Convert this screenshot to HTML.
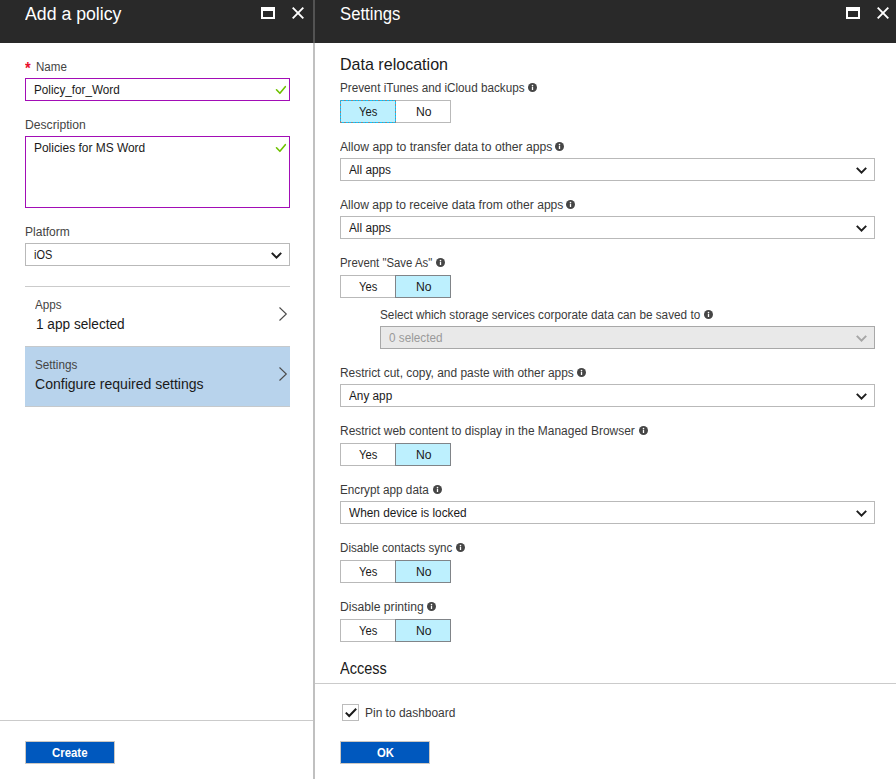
<!DOCTYPE html>
<html><head><meta charset="utf-8"><title>Add a policy</title>
<style>
html,body{margin:0;padding:0;}
body{width:896px;height:779px;position:relative;overflow:hidden;background:#fff;font-family:"Liberation Sans",sans-serif;}
.a{position:absolute;box-sizing:border-box;}
.t{position:absolute;white-space:nowrap;line-height:normal;transform-origin:0 0;}
.hdr{left:0;top:0;width:896px;height:43px;background:#292929;}
.inp{border:1px solid #a20db6;background:#fff;}
.sel{border:1px solid #b9b9b9;background:#fff;height:23px;}
.seld{border:1px solid #a8a8a8;background:#e9e9e9;height:23px;}
.tg{height:23px;border:1px solid #b9b9b9;background:#fff;}
.on{height:23px;border:1px solid #808488;background:#bdf0fe;}
.fo{background:repeating-linear-gradient(90deg,#8f8583 0 1.3px,transparent 1.3px 3.4px) 1px 0/100% 1px no-repeat,repeating-linear-gradient(90deg,#8f8583 0 1.3px,transparent 1.3px 3.4px) 1px 100%/100% 1px no-repeat,repeating-linear-gradient(180deg,#8f8583 0 1.3px,transparent 1.3px 3.4px) 0 1px/1px 100% no-repeat,repeating-linear-gradient(180deg,#8f8583 0 1.3px,transparent 1.3px 3.4px) 100% 1px/1px 100% no-repeat;}
.btn{height:23px;width:90px;background:#0058be;border:1px solid #cdc8c2;}
.hl{height:1px;background:#cbcbcb;}
svg{position:absolute;overflow:visible;}
</style></head><body>
<!-- header -->
<div class="a hdr"></div>
<div class="a" style="left:313px;top:0;width:2px;height:43px;background:#535353"></div>
<div class="a" style="left:313px;top:43px;width:2px;height:736px;background:#c0c0c0"></div>
<!-- header icons -->
<div class="a" style="left:261px;top:7px;width:14px;height:12px;border:2px solid #fff;border-top-width:4px"></div>
<svg style="left:292px;top:7px" width="12" height="12" viewBox="0 0 12 12"><path d="M0.7 0.7L11.3 11.3M11.3 0.7L0.7 11.3" stroke="#fff" stroke-width="1.9" fill="none"/></svg>
<div class="a" style="left:846px;top:7px;width:14px;height:12px;border:2px solid #fff;border-top-width:4px"></div>
<svg style="left:877px;top:7px" width="12" height="12" viewBox="0 0 12 12"><path d="M0.7 0.7L11.3 11.3M11.3 0.7L0.7 11.3" stroke="#fff" stroke-width="1.9" fill="none"/></svg>

<!-- left panel -->
<div class="a inp" style="left:25px;top:78px;width:265px;height:23px"></div>
<svg style="left:276px;top:86px" width="10" height="8" viewBox="0 0 10 8"><path d="M0.5 3.8L3.9 7.3L9.3 0.7" stroke="#6ec200" stroke-width="1.6" stroke-linecap="round" stroke-linejoin="round" fill="none"/></svg>
<div class="a inp" style="left:25px;top:136px;width:265px;height:72px"></div>
<svg style="left:276px;top:144px" width="10" height="8" viewBox="0 0 10 8"><path d="M0.5 3.8L3.9 7.3L9.3 0.7" stroke="#6ec200" stroke-width="1.6" stroke-linecap="round" stroke-linejoin="round" fill="none"/></svg>
<div class="a sel" style="left:25px;top:243px;width:265px"></div>
<svg style="left:271px;top:252px" width="11" height="7" viewBox="0 0 11 7"><path d="M0.8 0.9L5.5 5.6L10.2 0.9" stroke="#1e1e1e" stroke-width="2" fill="none"/></svg>

<div class="a hl" style="left:25px;top:286px;width:265px"></div>
<svg style="left:279px;top:307px" width="8" height="14" viewBox="0 0 8 14"><path d="M0.5 0.5L7.3 7L0.5 13.5" stroke="#4a4a4a" stroke-width="1.1" fill="none"/></svg>
<div class="a" style="left:25px;top:346px;width:265px;height:61px;background:#b8d3ec;border-top:1px solid #c5c9cc;border-bottom:1px solid #c5c9cc"></div>
<svg style="left:279px;top:367px" width="8" height="14" viewBox="0 0 8 14"><path d="M0.5 0.5L7.3 7L0.5 13.5" stroke="#4a4a4a" stroke-width="1.1" fill="none"/></svg>

<div class="a hl" style="left:0;top:720px;width:313px"></div>
<div class="a btn" style="left:25px;top:741px"></div>

<!-- right panel -->
<div class="a tg" style="left:340px;top:100px;width:111px"></div><div class="a on" style="left:340px;top:100px;width:56px;border:1px solid #10c4fc"></div><div class="a fo" style="left:340px;top:100px;width:56px;height:23px"></div>
<svg style="left:528px;top:83px" width="9" height="9" viewBox="0 0 9 9"><circle cx="4.5" cy="4.5" r="4.5" fill="#464646"/><rect x="3.85" y="3.7" width="1.3" height="3.3" fill="#fff"/><circle cx="4.5" cy="2.45" r="0.8" fill="#fff"/></svg>
<div class="a sel" style="left:340px;top:158px;width:535px"></div><svg style="left:856px;top:167px" width="11" height="7" viewBox="0 0 11 7"><path d="M0.8 0.9L5.5 5.6L10.2 0.9" stroke="#1e1e1e" stroke-width="2" fill="none"/></svg>
<svg style="left:555px;top:142px" width="9" height="9" viewBox="0 0 9 9"><circle cx="4.5" cy="4.5" r="4.5" fill="#464646"/><rect x="3.85" y="3.7" width="1.3" height="3.3" fill="#fff"/><circle cx="4.5" cy="2.45" r="0.8" fill="#fff"/></svg>
<div class="a sel" style="left:340px;top:216px;width:535px"></div><svg style="left:856px;top:225px" width="11" height="7" viewBox="0 0 11 7"><path d="M0.8 0.9L5.5 5.6L10.2 0.9" stroke="#1e1e1e" stroke-width="2" fill="none"/></svg>
<svg style="left:566px;top:200px" width="9" height="9" viewBox="0 0 9 9"><circle cx="4.5" cy="4.5" r="4.5" fill="#464646"/><rect x="3.85" y="3.7" width="1.3" height="3.3" fill="#fff"/><circle cx="4.5" cy="2.45" r="0.8" fill="#fff"/></svg>
<div class="a tg" style="left:340px;top:275px;width:111px"></div><div class="a on" style="left:395px;top:275px;width:56px"></div>
<svg style="left:436px;top:258px" width="9" height="9" viewBox="0 0 9 9"><circle cx="4.5" cy="4.5" r="4.5" fill="#464646"/><rect x="3.85" y="3.7" width="1.3" height="3.3" fill="#fff"/><circle cx="4.5" cy="2.45" r="0.8" fill="#fff"/></svg>
<div class="a seld" style="left:380px;top:326px;width:495px"></div><svg style="left:856px;top:335px" width="11" height="7" viewBox="0 0 11 7"><path d="M0.8 0.9L5.5 5.6L10.2 0.9" stroke="#a6a6a6" stroke-width="2" fill="none"/></svg>
<svg style="left:704px;top:310px" width="9" height="9" viewBox="0 0 9 9"><circle cx="4.5" cy="4.5" r="4.5" fill="#464646"/><rect x="3.85" y="3.7" width="1.3" height="3.3" fill="#fff"/><circle cx="4.5" cy="2.45" r="0.8" fill="#fff"/></svg>
<div class="a sel" style="left:340px;top:384px;width:535px"></div><svg style="left:856px;top:393px" width="11" height="7" viewBox="0 0 11 7"><path d="M0.8 0.9L5.5 5.6L10.2 0.9" stroke="#1e1e1e" stroke-width="2" fill="none"/></svg>
<svg style="left:577px;top:368px" width="9" height="9" viewBox="0 0 9 9"><circle cx="4.5" cy="4.5" r="4.5" fill="#464646"/><rect x="3.85" y="3.7" width="1.3" height="3.3" fill="#fff"/><circle cx="4.5" cy="2.45" r="0.8" fill="#fff"/></svg>
<div class="a tg" style="left:340px;top:443px;width:111px"></div><div class="a on" style="left:395px;top:443px;width:56px"></div>
<svg style="left:639px;top:426px" width="9" height="9" viewBox="0 0 9 9"><circle cx="4.5" cy="4.5" r="4.5" fill="#464646"/><rect x="3.85" y="3.7" width="1.3" height="3.3" fill="#fff"/><circle cx="4.5" cy="2.45" r="0.8" fill="#fff"/></svg>
<div class="a sel" style="left:340px;top:501px;width:535px"></div><svg style="left:856px;top:510px" width="11" height="7" viewBox="0 0 11 7"><path d="M0.8 0.9L5.5 5.6L10.2 0.9" stroke="#1e1e1e" stroke-width="2" fill="none"/></svg>
<svg style="left:433px;top:485px" width="9" height="9" viewBox="0 0 9 9"><circle cx="4.5" cy="4.5" r="4.5" fill="#464646"/><rect x="3.85" y="3.7" width="1.3" height="3.3" fill="#fff"/><circle cx="4.5" cy="2.45" r="0.8" fill="#fff"/></svg>
<div class="a tg" style="left:340px;top:560px;width:111px"></div><div class="a on" style="left:395px;top:560px;width:56px"></div>
<svg style="left:456px;top:543px" width="9" height="9" viewBox="0 0 9 9"><circle cx="4.5" cy="4.5" r="4.5" fill="#464646"/><rect x="3.85" y="3.7" width="1.3" height="3.3" fill="#fff"/><circle cx="4.5" cy="2.45" r="0.8" fill="#fff"/></svg>
<div class="a tg" style="left:340px;top:619px;width:111px"></div><div class="a on" style="left:395px;top:619px;width:56px"></div>
<svg style="left:427px;top:602px" width="9" height="9" viewBox="0 0 9 9"><circle cx="4.5" cy="4.5" r="4.5" fill="#464646"/><rect x="3.85" y="3.7" width="1.3" height="3.3" fill="#fff"/><circle cx="4.5" cy="2.45" r="0.8" fill="#fff"/></svg>
<div class="a hl" style="left:315px;top:683px;width:581px"></div>
<div class="a" style="left:342px;top:704px;width:17px;height:17px;border:1px solid #bcbcbc;background:#fff"></div>
<svg style="left:345px;top:708px" width="12" height="9" viewBox="0 0 12 9"><path d="M0.8 4.6L4.2 8L11.2 0.8" stroke="#1a1a1a" stroke-width="2" fill="none"/></svg>
<div class="a btn" style="left:340px;top:741px"></div>

<!-- text -->
<span class="t" style="left:25.00px;top:4.01px;font-size:18px;color:#ffffff;transform:scaleX(0.9831)">Add a policy</span>
<span class="t" style="left:340.40px;top:4.01px;font-size:18px;color:#ffffff;transform:scaleX(0.9271)">Settings</span>
<span class="t" style="left:25.00px;top:59.02px;font-size:17px;color:#e8112d;font-weight:700;transform:scaleX(0.8571)">*</span>
<span class="t" style="left:35.80px;top:59.74px;font-size:12px;color:#444;transform:scaleX(0.9649)">Name</span>
<span class="t" style="left:33.70px;top:82.89px;font-size:12px;color:#1a1a1a;transform:scaleX(0.9760)">Policy_for_Word</span>
<span class="t" style="left:24.95px;top:117.89px;font-size:12px;color:#444;transform:scaleX(1.0118)">Description</span>
<span class="t" style="left:33.70px;top:140.64px;font-size:12px;color:#1a1a1a;transform:scaleX(0.9947)">Policies for MS Word</span>
<span class="t" style="left:24.95px;top:224.89px;font-size:12px;color:#444;transform:scaleX(1.0026)">Platform</span>
<span class="t" style="left:34.00px;top:247.89px;font-size:12px;color:#1a1a1a;transform:scaleX(0.9125)">iOS</span>
<span class="t" style="left:35.00px;top:297.89px;font-size:12px;color:#444;transform:scaleX(0.9725)">Apps</span>
<span class="t" style="left:35.63px;top:315.83px;font-size:14px;color:#1a1a1a;transform:scaleX(0.9733)">1 app selected</span>
<span class="t" style="left:35.00px;top:357.89px;font-size:12px;color:#444;transform:scaleX(0.9744)">Settings</span>
<span class="t" style="left:35.00px;top:375.83px;font-size:14px;color:#1a1a1a;transform:scaleX(1.0030)">Configure required settings</span>
<span class="t" style="left:51.90px;top:746.14px;font-size:12px;color:#ffffff;font-weight:700;transform:scaleX(0.9501)">Create</span>
<span class="t" style="left:340.01px;top:54.84px;font-size:16.2px;color:#1a1a1a;transform:scaleX(0.9918)">Data relocation</span>
<span class="t" style="left:340.20px;top:80.89px;font-size:12px;color:#3a3a3a;transform:scaleX(0.9765)">Prevent iTunes and iCloud backups</span>
<span class="t" style="left:359.00px;top:104.64px;font-size:12px;color:#1a1a1a;transform:scaleX(0.9323)">Yes</span>
<span class="t" style="left:415.60px;top:104.64px;font-size:12px;color:#1a1a1a;transform:scaleX(1.0149)">No</span>
<span class="t" style="left:339.60px;top:140.14px;font-size:12px;color:#3a3a3a;transform:scaleX(1.0140)">Allow app to transfer data to other apps</span>
<span class="t" style="left:349.00px;top:163.14px;font-size:12px;color:#1a1a1a;transform:scaleX(0.9838)">All apps</span>
<span class="t" style="left:339.60px;top:198.14px;font-size:12px;color:#3a3a3a;transform:scaleX(1.0088)">Allow app to receive data from other apps</span>
<span class="t" style="left:349.00px;top:221.14px;font-size:12px;color:#1a1a1a;transform:scaleX(0.9838)">All apps</span>
<span class="t" style="left:340.20px;top:256.44px;font-size:12px;color:#3a3a3a;transform:scaleX(0.9484)">Prevent &quot;Save As&quot;</span>
<span class="t" style="left:359.00px;top:279.64px;font-size:12px;color:#1a1a1a;transform:scaleX(0.9323)">Yes</span>
<span class="t" style="left:415.60px;top:279.64px;font-size:12px;color:#1a1a1a;transform:scaleX(1.0149)">No</span>
<span class="t" style="left:380.30px;top:307.74px;font-size:12px;color:#3a3a3a;transform:scaleX(0.9796)">Select which storage services corporate data can be saved to</span>
<span class="t" style="left:389.20px;top:330.64px;font-size:12px;color:#9a9a9a;transform:scaleX(0.9772)">0 selected</span>
<span class="t" style="left:340.20px;top:366.14px;font-size:12px;color:#3a3a3a;transform:scaleX(0.9939)">Restrict cut, copy, and paste with other apps</span>
<span class="t" style="left:349.00px;top:389.14px;font-size:12px;color:#1a1a1a;transform:scaleX(0.9806)">Any app</span>
<span class="t" style="left:340.20px;top:423.64px;font-size:12px;color:#3a3a3a;transform:scaleX(0.9954)">Restrict web content to display in the Managed Browser</span>
<span class="t" style="left:359.00px;top:447.64px;font-size:12px;color:#1a1a1a;transform:scaleX(0.9323)">Yes</span>
<span class="t" style="left:415.60px;top:447.64px;font-size:12px;color:#1a1a1a;transform:scaleX(1.0149)">No</span>
<span class="t" style="left:340.20px;top:482.84px;font-size:12px;color:#3a3a3a;transform:scaleX(0.9775)">Encrypt app data</span>
<span class="t" style="left:349.00px;top:505.84px;font-size:12px;color:#1a1a1a;transform:scaleX(0.9855)">When device is locked</span>
<span class="t" style="left:340.20px;top:540.84px;font-size:12px;color:#3a3a3a;transform:scaleX(0.9685)">Disable contacts sync</span>
<span class="t" style="left:359.00px;top:564.64px;font-size:12px;color:#1a1a1a;transform:scaleX(0.9323)">Yes</span>
<span class="t" style="left:415.60px;top:564.64px;font-size:12px;color:#1a1a1a;transform:scaleX(1.0149)">No</span>
<span class="t" style="left:340.20px;top:599.94px;font-size:12px;color:#3a3a3a;transform:scaleX(1.0117)">Disable printing</span>
<span class="t" style="left:359.00px;top:623.64px;font-size:12px;color:#1a1a1a;transform:scaleX(0.9323)">Yes</span>
<span class="t" style="left:415.60px;top:623.64px;font-size:12px;color:#1a1a1a;transform:scaleX(1.0149)">No</span>
<span class="t" style="left:340.20px;top:659.49px;font-size:16.2px;color:#1a1a1a;transform:scaleX(0.8948)">Access</span>
<span class="t" style="left:365.30px;top:705.94px;font-size:12px;color:#3a3a3a;transform:scaleX(0.9960)">Pin to dashboard</span>
<span class="t" style="left:376.70px;top:745.94px;font-size:12px;color:#ffffff;font-weight:700;transform:scaleX(0.9381)">OK</span>
</body></html>
